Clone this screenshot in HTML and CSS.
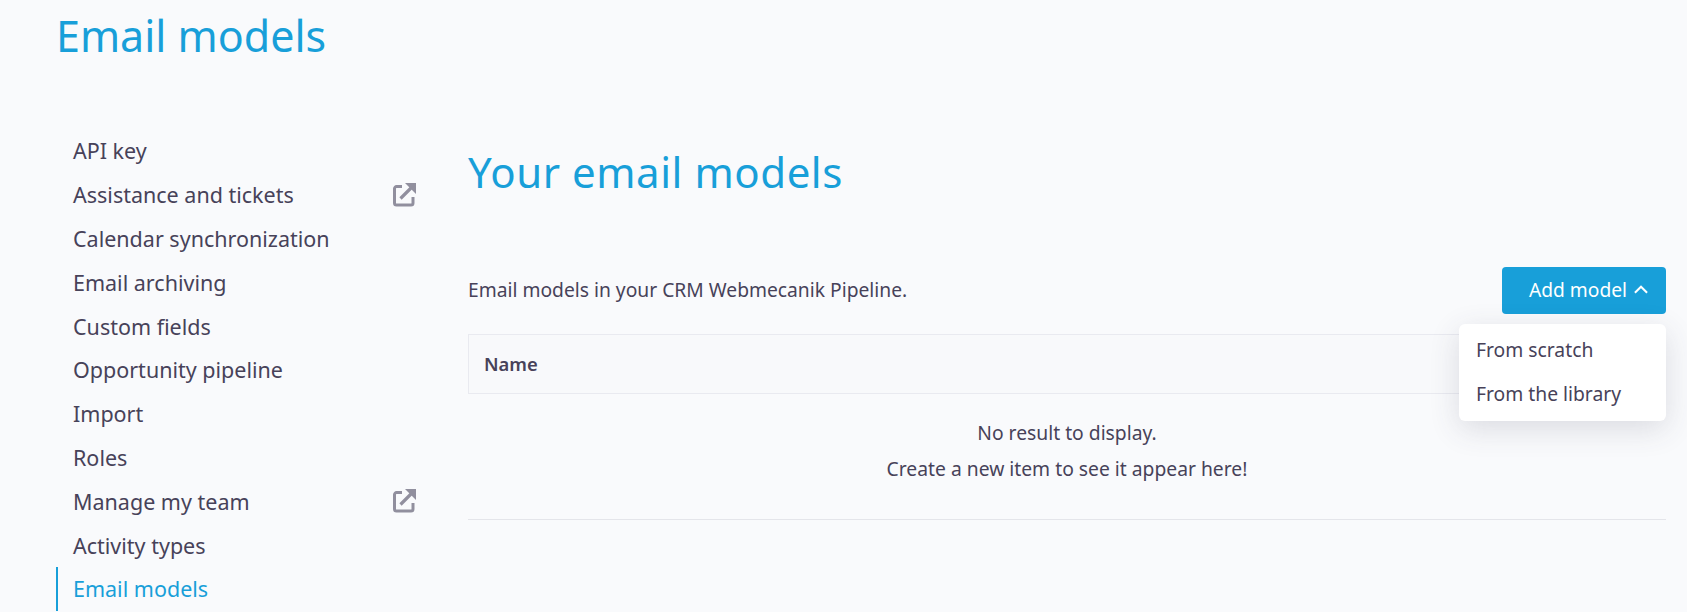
FILE: index.html
```html
<!DOCTYPE html>
<html lang="en">
<head>
<meta charset="utf-8">
<title>Email models</title>
<link rel="stylesheet" href="styles.css">
</head>
<body>
<svg class="sprite" width="0" height="0"><symbol id="ext" viewBox="0 0 24 24"><path d="M10 3.6H4.5a2 2 0 0 0-2 2v14.4a2 2 0 0 0 2 2H19a2 2 0 0 0 2-2V14" fill="none" stroke="currentColor" stroke-width="3"/><path d="M8.500 15.500 19 5" fill="none" stroke="currentColor" stroke-width="3.2"/><path d="M13 0h11v11z" fill="currentColor"/></symbol></svg>
<header class="page-head"><h1 class="page-title">Email models</h1></header>
<div class="layout">
  <nav class="side">
    <a class="side-item">API key</a>
    <a class="side-item">Assistance and tickets<svg class="ext"><use href="#ext"/></svg></a>
    <a class="side-item">Calendar synchronization</a>
    <a class="side-item">Email archiving</a>
    <a class="side-item">Custom fields</a>
    <a class="side-item">Opportunity pipeline</a>
    <a class="side-item">Import</a>
    <a class="side-item">Roles</a>
    <a class="side-item">Manage my team<svg class="ext"><use href="#ext"/></svg></a>
    <a class="side-item">Activity types</a>
    <a class="side-item active">Email models</a>
  </nav>
  <main class="content">
    <h2 class="content-title">Your email models</h2>
    <div class="toolbar">
      <p class="intro">Email models in your CRM Webmecanik Pipeline.</p>
      <div class="add-wrap">
        <button class="add-btn">Add model<svg class="chev" viewBox="0 0 14 9"><path d="M.9 7.800 7 1.700l6.100 6.100" fill="none" stroke="currentColor" stroke-width="2"/></svg></button>
        <div class="menu">
          <div class="menu-item">From scratch</div>
          <div class="menu-item">From the library</div>
        </div>
      </div>
    </div>
    <div class="table-head">Name</div>
    <div class="empty">
      <p>No result to display.</p>
      <p>Create a new item to see it appear here!</p>
    </div>
  </main>
</div>
</body>
</html>
```
FILE: styles.css
```css
* { box-sizing: border-box; }
html, body { margin: 0; height: 100%; }
body {
  background: #f9fafc;
  color: #474259;
  font-family: "Noto Sans", "Open Sans", sans-serif;
  overflow: hidden;
}
.sprite { display: block; height: 0; }
.page-head { height: 129px; padding: 7px 0 0 56px; }
.page-title {
  margin: 0;
  font-size: 43px;
  line-height: 58px;
  font-weight: 400;
  color: #189fd9;
}
.layout { display: flex; padding-left: 56px; padding-right: 21px; }
.side { width: 412px; flex: none; display: flex; flex-direction: column; }
.side-item {
  height: 43.8px;
  display: flex;
  align-items: center;
  justify-content: space-between;
  padding: 0 1px 0 17px;
  width: 361px;
  font-size: 21.5px;
  color: #474259;
}
.side-item.active { color: #189fd9; border-left: 2px solid #189fd9; padding-left: 15px; }
.ext { width: 24px; height: 24px; color: #918f9e; }
.content { flex: 1; min-width: 0; position: relative; }
.content-title {
  margin: 14px 0 0;
  font-size: 42px;
  line-height: 58px;
  font-weight: 400;
  color: #189fd9;
  letter-spacing: 0.55px;
}
.toolbar {
  margin-top: 66px;
  height: 47px;
  display: flex;
  align-items: center;
  justify-content: space-between;
}
.intro { margin: 0 0 2px; font-size: 19.25px; }
.add-wrap { position: relative; }
.add-btn {
  width: 164px;
  height: 47px;
  padding: 0 0 2px 9px;
  border: 0;
  border-radius: 4px;
  background: #189fd9;
  color: #fff;
  font: inherit;
  font-size: 19.2px;
  display: flex;
  align-items: center;
  justify-content: center;
  gap: 7px;
}
.chev { width: 14px; height: 9px; }
.menu {
  position: absolute;
  z-index: 2;
  right: 0;
  top: 57px;
  width: 207px;
  height: 97px;
  padding: 3px 0 5px;
  background: #fff;
  border-radius: 6px;
  box-shadow: 0 8px 30px rgba(60, 60, 90, 0.16);
}
.menu-item {
  height: 44.5px;
  display: flex;
  align-items: center;
  padding-left: 17px;
  font-size: 19.3px;
}
.table-head {
  margin-top: 20px;
  height: 60px;
  display: flex;
  align-items: center;
  padding: 0 0 2px 15px;
  background: #f8f9fb;
  border: 1px solid #e9eaf0;
  border-right: 0;
  font-size: 18.4px;
  font-weight: 600;
}
.empty {
  height: 126px;
  padding-top: 21px;
  text-align: center;
  border-bottom: 1px solid #e4e5ea;
  font-size: 19.3px;
}
.empty p { margin: 0; line-height: 36px; }
```
